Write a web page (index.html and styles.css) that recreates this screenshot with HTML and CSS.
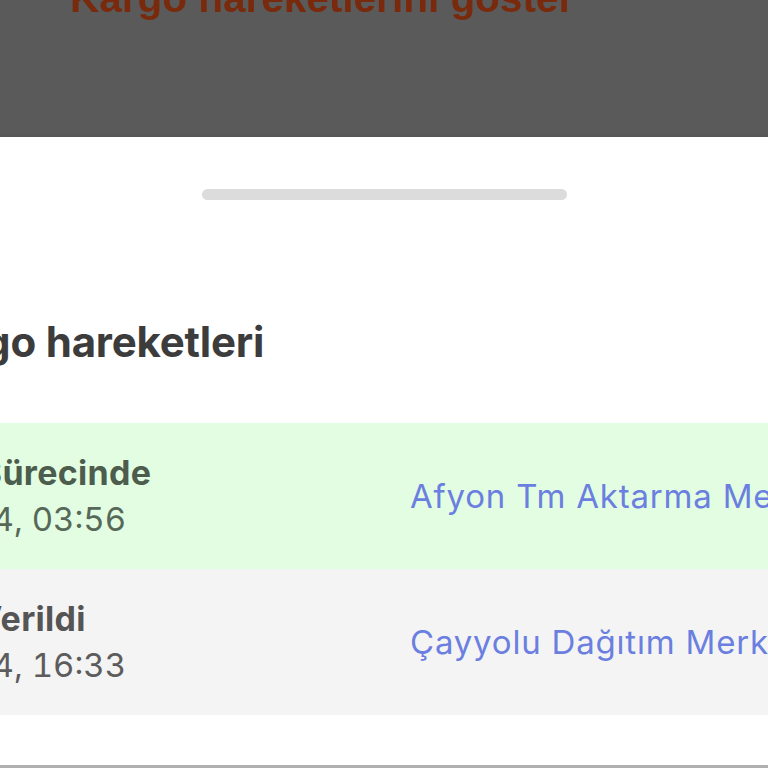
FILE: index.html
```html
<!DOCTYPE html>
<html lang="tr">
<head>
<meta charset="utf-8">
<title>Kargo hareketleri</title>
<link rel="stylesheet" href="styles.css">
</head>
<body>
  <div class="backdrop">
    <p class="backdrop-link">Kargo hareketlerini göster</p>
  </div>
  <section class="sheet">
    <div class="handle"></div>
    <h2 class="sheet-title">Kargo hareketleri</h2>
    <ul class="moves">
      <li class="move move--current">
        <div class="move-status">
          <strong class="move-label">Transfer Sürecinde</strong>
          <span class="move-date">12.03.2024, 03:56</span>
        </div>
        <div class="move-place">Afyon Tm Aktarma Merkezi</div>
      </li>
      <li class="move">
        <div class="move-status">
          <strong class="move-label">Kuryeye Verildi</strong>
          <span class="move-date">11.03.2024, 16:33</span>
        </div>
        <div class="move-place">Çayyolu Dağıtım Merkezi</div>
      </li>
    </ul>
  </section>
</body>
</html>
```

FILE: styles.css
```css
* { box-sizing: border-box; }

html, body {
  margin: 0;
  padding: 0;
  width: 768px;
  height: 768px;
  overflow: hidden;
  background: #ffffff;
  font-family: Inter, "Noto Sans", sans-serif;
}

.backdrop {
  height: 137px;
  background: #5a5a5a;
  overflow: hidden;
}

.backdrop-link {
  margin: -22px 0 0 70px;
  font-family: "Liberation Sans", Arial, sans-serif;
  font-weight: 700;
  font-size: 40.5px;
  line-height: 40px;
  color: #7a2a0c;
  white-space: nowrap;
  filter: blur(0.5px);
}

.sheet {
  background: #ffffff;
  box-shadow: 0 -1px 3px rgba(0, 0, 0, 0.08);
  height: 631px;
  border-bottom: 3px solid #b0b0b0;
  display: flex;
  flex-direction: column;
}

.handle {
  align-self: center;
  width: 365px;
  height: 11px;
  margin-top: 52px;
  border-radius: 6px;
  background: #dcdcdc;
}

.sheet-title {
  margin: 120px 0 59px -86px;
  font-size: 42px;
  line-height: 44px;
  font-weight: 700;
  color: #3c3c3c;
  white-space: nowrap;
  letter-spacing: -0.2px;
}

.moves {
  list-style: none;
  margin: 0;
  padding: 0;
}

.move {
  display: grid;
  grid-template-columns: 410px auto;
  align-items: center;
  padding: 26px 0;
  background: #f4f4f4;
  white-space: nowrap;
}

.move--current {
  background: #e2fde2;
}

.move-status {
  display: flex;
  flex-direction: column;
  margin-left: -175px;
  font-size: 33px;
  line-height: 47px;
  font-variant-numeric: tabular-nums;
}

.move-label {
  margin-left: 2px;
  font-size: 34px;
  font-weight: 700;
  letter-spacing: 0.3px;
  color: #555555;
}

.move-date {
  font-weight: 400;
  color: #5c5c5c;
}

.move--current .move-label { color: #4d5d4d; }
.move--current .move-date { color: #586858; }

.move-place {
  font-size: 33px;
  line-height: 47px;
  letter-spacing: 0.8px;
  color: #6b7fe0;
}
```
